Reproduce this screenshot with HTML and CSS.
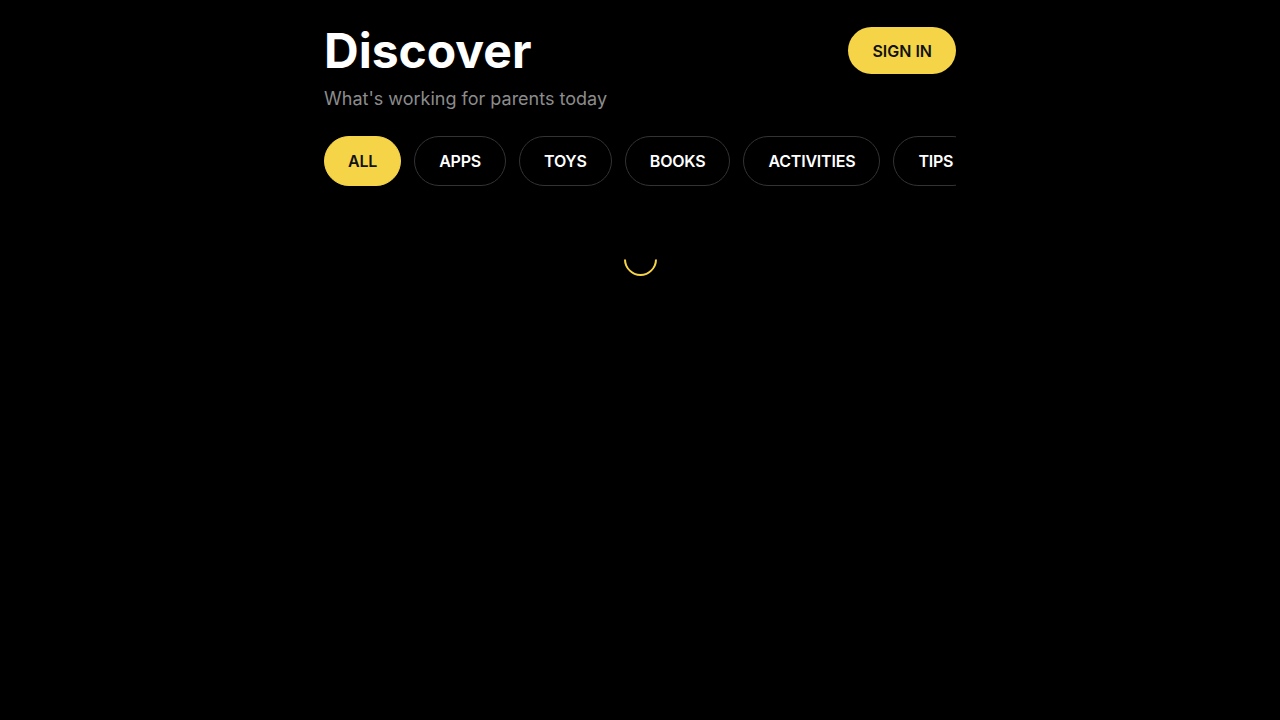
FILE: index.html
```html
<!DOCTYPE html>
<html lang="en">
<head>
<meta charset="utf-8">
<title>Discover</title>
<link rel="stylesheet" href="styles.css">
</head>
<body>
<main class="page">
  <header class="header">
    <div class="heading">
      <h1 class="title">Discover</h1>
      <p class="subtitle">What's working for parents today</p>
    </div>
    <button class="signin">SIGN IN</button>
  </header>
  <nav class="chips">
    <button class="chip chip-active">ALL</button>
    <button class="chip">APPS</button>
    <button class="chip">TOYS</button>
    <button class="chip">BOOKS</button>
    <button class="chip">ACTIVITIES</button>
    <button class="chip">TIPS</button>
  </nav>
  <div class="loading">
    <div class="spinner"></div>
  </div>
</main>
</body>
</html>
```
FILE: styles.css
```css
* { box-sizing: border-box; }
html, body {
  margin: 0;
  background: #000;
  color: #fff;
  font-family: Inter, "Noto Sans", sans-serif;
}
.page {
  width: 632px;
  margin: 0 auto;
  padding-top: 22px;
}
.header {
  display: flex;
  justify-content: space-between;
  align-items: flex-start;
}
.title {
  margin: 0;
  font-size: 48px;
  line-height: 58px;
  font-weight: 700;
}
.subtitle {
  margin: 6px 0 0;
  font-size: 18px;
  line-height: 26px;
  color: #8c8c8c;
}
.signin {
  margin-top: 5px;
  height: 47px;
  padding: 0 24px;
  border: none;
  border-radius: 24px;
  background: #f5d547;
  color: #111;
  font-family: inherit;
  font-size: 16px;
  font-weight: 600;
}
.chips {
  display: flex;
  gap: 13px;
  margin-top: 24px;
  overflow: hidden;
}
.chip {
  flex: none;
  height: 50px;
  padding: 0 24px;
  border: 1px solid #333;
  border-radius: 25px;
  background: #000;
  color: #fff;
  font-family: inherit;
  font-size: 16px;
  font-weight: 600;
  letter-spacing: -0.2px;
}
.chip-active {
  padding: 0 23px;
  background: #f5d547;
  border-color: #f5d547;
  color: #111;
}
.loading {
  display: flex;
  justify-content: center;
  padding-top: 57px;
}
.spinner {
  width: 33px;
  height: 33px;
  border-radius: 50%;
  border: 2px solid transparent;
  border-bottom-color: #f5d547;
  border-left-color: #f5d547;
  transform: rotate(-45deg);
}
```
